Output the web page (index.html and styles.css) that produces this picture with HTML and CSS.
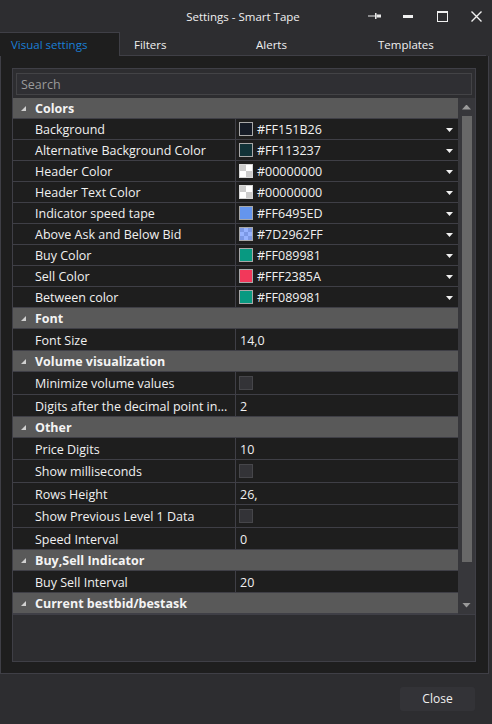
FILE: index.html
```html
<!DOCTYPE html>
<html>
<head>
<meta charset="utf-8">
<link rel="stylesheet" href="styles.css">
</head>
<body>
<div class="window">
  <div class="titlebar">
    <div></div>
    <div class="title">Settings - Smart Tape</div>
    <div class="controls">
      <div class="ctl"><svg width="13" height="6" viewBox="0 0 13 6"><rect x="0" y="2.5" width="7" height="1" fill="#e8e8e8"/><rect x="7" y="0" width="1.5" height="6" fill="#e8e8e8"/><rect x="8.5" y="1.5" width="4.5" height="3" fill="#e8e8e8"/></svg></div>
      <div class="ctl"><svg width="10" height="3" viewBox="0 0 10 3"><rect x="0" y="0" width="10" height="3" fill="#f0f0f0"/></svg></div>
      <div class="ctl"><svg width="11" height="11" viewBox="0 0 11 11"><rect x="0.5" y="0.5" width="10" height="10" fill="none" stroke="#f0f0f0" stroke-width="1"/><rect x="0" y="0" width="11" height="2" fill="#f0f0f0"/></svg></div>
      <div class="ctl"><svg width="11" height="11" viewBox="0 0 11 11"><path d="M0.5 0.5 L10.5 10.5 M10.5 0.5 L0.5 10.5" stroke="#f0f0f0" stroke-width="1.4"/></svg></div>
    </div>
  </div>
  <div class="tabs">
    <div class="tab active">Visual settings</div>
    <div class="tab">Filters</div>
    <div class="tab">Alerts</div>
    <div class="tab">Templates</div>
  </div>
  <div class="content">
    <div class="panel">
      <div class="search">Search</div>
      <div class="grid">
        <div class="rows">
          <div class="hdr"><span class="exp"></span>Colors</div>
          <div class="row r21"><div class="name">Background</div><div class="val"><span class="sw" style="background:#151B26"></span><span class="hex">#FF151B26</span><span class="dd"></span></div></div>
          <div class="row r21"><div class="name">Alternative Background Color</div><div class="val"><span class="sw" style="background:#113237"></span><span class="hex">#FF113237</span><span class="dd"></span></div></div>
          <div class="row r21"><div class="name">Header Color</div><div class="val"><span class="sw checker"></span><span class="hex">#00000000</span><span class="dd"></span></div></div>
          <div class="row r21"><div class="name">Header Text Color</div><div class="val"><span class="sw checker"></span><span class="hex">#00000000</span><span class="dd"></span></div></div>
          <div class="row r21"><div class="name">Indicator speed tape</div><div class="val"><span class="sw" style="background:#6495ED"></span><span class="hex">#FF6495ED</span><span class="dd"></span></div></div>
          <div class="row r21"><div class="name">Above Ask and Below Bid</div><div class="val"><span class="sw checker-blue"></span><span class="hex">#7D2962FF</span><span class="dd"></span></div></div>
          <div class="row r21"><div class="name">Buy Color</div><div class="val"><span class="sw" style="background:#089981"></span><span class="hex">#FF089981</span><span class="dd"></span></div></div>
          <div class="row r21"><div class="name">Sell Color</div><div class="val"><span class="sw" style="background:#F2385A"></span><span class="hex">#FFF2385A</span><span class="dd"></span></div></div>
          <div class="row r21"><div class="name">Between color</div><div class="val"><span class="sw" style="background:#089981"></span><span class="hex">#FF089981</span><span class="dd"></span></div></div>
          <div class="hdr"><span class="exp"></span>Font</div>
          <div class="row r22"><div class="name">Font Size</div><div class="val text">14,0</div></div>
          <div class="hdr"><span class="exp"></span>Volume visualization</div>
          <div class="row r23"><div class="name">Minimize volume values</div><div class="val"><span class="cb"></span></div></div>
          <div class="row r22"><div class="name">Digits after the decimal point in...</div><div class="val text">2</div></div>
          <div class="hdr"><span class="exp"></span>Other</div>
          <div class="row r22"><div class="name">Price Digits</div><div class="val text">10</div></div>
          <div class="row r23"><div class="name">Show milliseconds</div><div class="val"><span class="cb"></span></div></div>
          <div class="row r22"><div class="name">Rows Height</div><div class="val text">26,</div></div>
          <div class="row r23"><div class="name">Show Previous Level 1 Data</div><div class="val"><span class="cb"></span></div></div>
          <div class="row r22"><div class="name">Speed Interval</div><div class="val text">0</div></div>
          <div class="hdr"><span class="exp"></span>Buy,Sell Indicator</div>
          <div class="row r22"><div class="name">Buy Sell Interval</div><div class="val text">20</div></div>
          <div class="hdr"><span class="exp"></span>Current bestbid/bestask</div>
        </div>
        <div class="scrollbar">
          <div class="sbtn"><span class="up"></span></div>
          <div class="track"><div class="thumb"></div></div>
          <div class="sbtn"><span class="down"></span></div>
        </div>
      </div>
    </div>
  </div>
  <div class="footer">
    <div class="btn">Close</div>
  </div>
</div>
</body>
</html>
```

FILE: styles.css
```css
* { box-sizing: border-box; }
html, body {
  margin: 0;
  padding: 0;
  background: #2d2d30;
}
body {
  width: 492px;
  height: 724px;
  overflow: hidden;
  font-family: "Open Sans", "Noto Sans", sans-serif;
  font-size: 12.5px;
  color: #f0f0f0;
}
.window {
  display: flex;
  flex-direction: column;
  height: 724px;
}
.titlebar {
  height: 32px;
  display: grid;
  grid-template-columns: 1fr auto 1fr;
  align-items: center;
  background: #2d2d30;
}
.title {
  font-size: 11.5px;
  color: #f0f0f0;
  padding-right: 6px;
  padding-top: 1px;
}
.controls {
  display: flex;
  justify-content: flex-end;
  gap: 2px;
  height: 32px;
}
.ctl {
  width: 32px;
  height: 32px;
  display: flex;
  align-items: center;
  justify-content: center;
}
.tabs {
  height: 24px;
  display: flex;
  background: #2d2d30;
  font-size: 11.5px;
}
.tab {
  width: 122px;
  padding-left: 14px;
  padding-top: 2px;
  line-height: 21px;
  color: #f0f0f0;
  border-bottom: 1px solid #3f3f46;
}
.tab.active {
  width: 120px;
  padding-left: 11px;
  padding-top: 1px;
  background: #1e1e1e;
  color: #1b7fd6;
  border-top: 1px solid #3f3f46;
  border-right: 1px solid #3f3f46;
  border-bottom: none;
  line-height: 22px;
}
.content {
  width: 489px;
  height: 618px;
  background: #1e1e1e;
  border: 1px solid #3f3f46;
  border-top: none;
  padding: 12px 12px 11px 11px;
  display: flex;
}
.panel {
  flex: 1;
  background: #2d2d30;
  border: 1px solid #3f3f46;
  display: flex;
  flex-direction: column;
}
.search {
  margin: 4px 3px 0 3px;
  height: 22px;
  border: 1px solid #434346;
  background: #2f2f33;
  color: #9a9a9a;
  padding-left: 4px;
  padding-top: 1px;
  line-height: 20px;
}
.grid {
  margin-top: 3px;
  display: flex;
  border-bottom: 1px solid #3f3f46;
}
.rows {
  flex: 1;
  display: flex;
  flex-direction: column;
}
.hdr {
  height: 21px;
  background: #595959;
  border-bottom: 1px solid #3f3f46;
  font-weight: bold;
  color: #f4f4f4;
  display: flex;
  align-items: center;
  padding-left: 8px;
  padding-top: 1px;
}
.exp {
  width: 5px;
  height: 5px;
  margin-right: 9px;
  background: #d0d0d0;
  clip-path: polygon(100% 0, 100% 100%, 0 100%);
}
.row {
  display: grid;
  grid-template-columns: 222px 1fr;
  background: #1e1e1e;
  border-bottom: 1px solid #3f3f46;
}
.r21 { height: 21px; }
.r22 { height: 22px; }
.r23 { height: 23px; }
.name {
  padding-left: 22px;
  padding-top: 1px;
  display: flex;
  align-items: center;
  white-space: nowrap;
  overflow: hidden;
}
.val {
  border-left: 1px solid #3f3f46;
  display: flex;
  align-items: center;
  padding-left: 3px;
}
.val.text {
  padding-left: 4px;
  padding-top: 1px;
}
.sw {
  width: 14px;
  height: 14px;
  border: 1px solid #a8a8a8;
  flex: none;
}
.checker {
  border-color: #d8d8d8;
  background: conic-gradient(#ffffff 0 25%, #cccccc 0 50%, #ffffff 0 75%, #cccccc 0) 0 0 / 12px 12px;
}
.checker-blue {
  border-color: #a8a8a8;
  background: conic-gradient(#96b2ff 0 25%, #7c98e5 0 50%, #96b2ff 0 75%, #7c98e5 0) 0 0 / 8px 8px;
}
.hex {
  margin-left: 4px;
  padding-top: 1px;
  flex: 1;
}
.dd {
  width: 7px;
  height: 4px;
  margin-right: 5px;
  margin-top: 2px;
  background: #f0f0f0;
  clip-path: polygon(0 0, 100% 0, 50% 100%);
}
.cb {
  width: 14px;
  height: 14px;
  background: #333337;
  border: 1px solid #46464a;
}
.scrollbar {
  width: 17px;
  background: #37373b;
  display: flex;
  flex-direction: column;
}
.sbtn {
  height: 18px;
  display: flex;
  align-items: center;
  justify-content: center;
}
.up {
  width: 9px;
  height: 5px;
  background: #9a9a9a;
  clip-path: polygon(50% 0, 100% 100%, 0 100%);
}
.down {
  width: 9px;
  height: 5px;
  background: #9a9a9a;
  clip-path: polygon(0 0, 100% 0, 50% 100%);
}
.track {
  flex: 1;
  padding-left: 4px;
}
.thumb {
  width: 10px;
  height: 446px;
  background: #686868;
}
.footer {
  flex: 1;
  background: #2d2d30;
  display: flex;
  justify-content: flex-end;
  align-items: flex-start;
  padding: 13px 17px 0 0;
}
.btn {
  width: 75px;
  height: 24px;
  background: #333337;
  border-radius: 3px;
  text-align: center;
  line-height: 24px;
  font-size: 12px;
  color: #f0f0f0;
}
```
